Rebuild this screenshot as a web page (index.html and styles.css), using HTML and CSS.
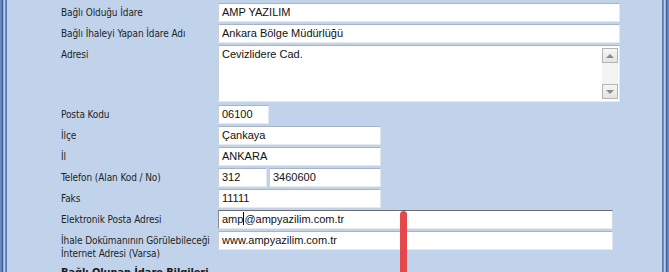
FILE: index.html
```html
<!DOCTYPE html>
<html lang="tr">

<head>
    <meta charset="UTF-8">
    <meta name="viewport" content="width=device-width, initial-scale=1.0">
    <title>İdare Bilgileri</title>
    <link rel="stylesheet" href="styles.css">
</head>

<body>
    <div class="window">
        <div class="frame frameLeft"></div>
        <section class="panel">
            <div class="row">
                <label>Bağlı Olduğu İdare</label>
                <div class="field wide">AMP YAZILIM</div>
            </div>
            <div class="row">
                <label>Bağlı İhaleyi Yapan İdare Adı</label>
                <div class="field wide">Ankara Bölge Müdürlüğü</div>
            </div>
            <div class="row rowMemo">
                <label>Adresi</label>
                <div class="field wide memo">
                    <span>Cevizlidere Cad.</span>
                    <div class="scrollbar">
                        <span class="arrow up"></span>
                        <span class="arrow down"></span>
                    </div>
                </div>
            </div>
            <div class="row">
                <label>Posta Kodu</label>
                <div class="field small">06100</div>
            </div>
            <div class="row">
                <label>İlçe</label>
                <div class="field medium">Çankaya</div>
            </div>
            <div class="row">
                <label>İl</label>
                <div class="field medium">ANKARA</div>
            </div>
            <div class="row">
                <label>Telefon (Alan Kod / No)</label>
                <div class="phone">
                    <div class="field code">312</div>
                    <div class="field number">3460600</div>
                </div>
            </div>
            <div class="row">
                <label>Faks</label>
                <div class="field medium">11111</div>
            </div>
            <div class="row">
                <label>Elektronik Posta Adresi</label>
                <div class="field long focused">amp<span class="caret"></span>@ampyazilim.com.tr</div>
            </div>
            <div class="row rowTall">
                <label>İhale Dokümanının Görülebileceği<br>İnternet Adresi (Varsa)</label>
                <div class="field long">www.ampyazilim.com.tr</div>
            </div>
            <h3 class="groupTitle">Bağlı Olunan İdare Bilgileri</h3>
            <div class="pointer"></div>
        </section>
        <div class="frame frameRight"></div>
    </div>
</body>

</html>
```

FILE: styles.css
```css
* {
    box-sizing: border-box;
    margin: 0;
    padding: 0;
}

body {
    width: 669px;
    height: 272px;
    overflow: hidden;
    background-color: #c1d3eb;
    font-family: "DejaVu Sans Condensed", "DejaVu Sans", sans-serif;
    font-size: 10px;
    letter-spacing: -0.1px;
    color: #1f1f1f;
}

.window {
    display: flex;
    height: 272px;
}

.frame {
    width: 7px;
    flex-shrink: 0;
}

.frameLeft {
    background: linear-gradient(to right, #6e8fc6 0 1px, #5a7cb8 1px 2px, #3f5f9c 2px 3px, #97b1dc 3px 4px, #b7cbe9 4px 5px, #6f8fc6 5px 6px, #5876b0 6px 7px);
}

.frameRight {
    background: linear-gradient(to right, #5876b0 0 1px, #6f8fc6 1px 2px, #b7cbe9 2px 3px, #97b1dc 3px 4px, #3f5f9c 4px 5px, #5a7cb8 5px 6px, #6e8fc6 6px 7px);
}

.panel {
    position: relative;
    flex: 1;
    overflow: hidden;
    padding: 3px 0 0 54px;
}

.row {
    display: flex;
    align-items: flex-start;
    margin-bottom: 2px;
}

.row label {
    width: 157px;
    flex-shrink: 0;
    white-space: nowrap;
    line-height: 18px;
    padding-top: 1px;
}

.rowMemo {
    margin-bottom: 3px;
}

.rowTall label {
    line-height: 13px;
    padding-top: 3px;
}

.field {
    height: 19px;
    padding: 0 3px;
    background-color: #fff;
    border: 1px solid;
    border-color: #a9b4c2 #e4e8ee #e6e9ee #c9d0da;
    font-family: "Liberation Sans", Arial, sans-serif;
    font-size: 11px;
    letter-spacing: 0;
    line-height: 17px;
    color: #111;
}

.wide {
    width: 402px;
}

.small {
    width: 51px;
}

.medium {
    width: 163px;
}

.long {
    width: 395px;
}

.phone {
    display: flex;
    gap: 2px;
}

.code {
    width: 49px;
}

.number {
    width: 112px;
}

.memo {
    position: relative;
    height: 57px;
    padding-top: 2px;
    line-height: 13px;
}

.scrollbar {
    position: absolute;
    top: 2px;
    right: 1px;
    bottom: 2px;
    width: 16px;
    display: flex;
    flex-direction: column;
    justify-content: space-between;
    background-color: #f3f3f3;
}

.arrow {
    height: 15px;
    border: 1px solid #b4b4b4;
    background: linear-gradient(#f7f7f7, #e3e3e3);
    display: grid;
    place-items: center;
}

.arrow::after {
    content: "";
    border-left: 4px solid transparent;
    border-right: 4px solid transparent;
}

.up::after {
    border-bottom: 4px solid #8a8a8a;
}

.down::after {
    border-top: 4px solid #8a8a8a;
}

.focused {
    border-color: #6b6b6b #d4d8de #e6e9ee #8c8c8c;
}

.caret {
    display: inline-block;
    width: 1px;
    height: 13px;
    vertical-align: -2px;
    background-color: #000;
}

.groupTitle {
    margin-top: 6px;
    font-size: 11px;
    line-height: 13px;
    font-weight: bold;
    color: #1a1a1a;
}

.pointer {
    position: absolute;
    left: 393px;
    top: 211px;
    width: 7px;
    height: 70px;
    border-radius: 4px 4px 0 0;
    background-color: #e5484b;
}
```
